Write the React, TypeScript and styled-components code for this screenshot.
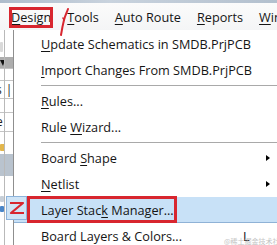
import React from "react";
import styled, { createGlobalStyle } from "styled-components";

const Global = createGlobalStyle`
  html, body { margin: 0; padding: 0; background: #ffffff; }
  body { font-family: "Open Sans", "Noto Sans", "Liberation Sans", sans-serif; overflow: hidden; }
`;

const Screen = styled.div`
  position: relative;
  width: 277px;
  height: 245px;
  overflow: hidden;
  display: flex;
  flex-direction: column;
  background: #ffffff;
`;

const TitleEdge = styled.div`
  height: 3px;
  flex: none;
  background: linear-gradient(90deg, #aebccb 0%, #c9d3de 40%, #b3c0ce 100%);
`;

const MenuBar = styled.div`
  height: 27px;
  flex: none;
  display: flex;
  align-items: stretch;
  padding-left: 3px;
  background: linear-gradient(180deg, #fbfbfb 0%, #f4f5f6 100%);
  font-size: 12.7px;
  color: #151515;
`;

const BarItem = styled.div<{ $marked?: boolean }>`
  position: relative;
  display: flex;
  align-items: center;
  padding: 0 8px;
  white-space: nowrap;
  ${(p) =>
    p.$marked
      ? `&::after {
          content: "";
          position: absolute;
          left: 6px; right: 6px; top: 4px; bottom: 2px;
          border: 3px solid #d8262f;
        }`
      : ""}
`;

const Key = styled.span`
  text-decoration: underline;
  text-decoration-thickness: 1px;
  text-underline-offset: 2px;
`;

const Workspace = styled.div`
  flex: 1;
  display: flex;
  min-height: 0;
`;

const SidePanel = styled.div`
  position: relative;
  width: 13px;
  flex: none;
  display: flex;
  flex-direction: column;
  background: #ffffff;
  overflow: hidden;
  &::before {
    content: "";
    position: absolute;
    left: 4px; top: 0; bottom: 0;
    width: 1px;
    background: #b9b9b9;
  }
`;

const PanelRow = styled.div<{ $h: number; $bg?: string; $line?: boolean }>`
  height: ${(p) => p.$h}px;
  flex: none;
  background: ${(p) => p.$bg ?? "transparent"};
  border-bottom: ${(p) => (p.$line ? "1px solid #c4c4c4" : "none")};
  display: flex;
  align-items: center;
  font-size: 12px;
  color: #222;
  line-height: 1;
`;

const DropTriangle = styled.span`
  width: 0; height: 0;
  border-left: 3px solid transparent;
  border-right: 2px solid transparent;
  border-top: 6px solid #111;
`;

const Frag = styled.span<{ $dx: number }>`
  margin-left: ${(p) => p.$dx}px;
`;

const IconChip = styled.span<{ $c: string; $w?: number; $h?: number }>`
  display: block;
  width: ${(p) => p.$w ?? 4}px;
  height: ${(p) => p.$h ?? 8}px;
  background: ${(p) => p.$c};
  border-radius: 1px;
`;

const Dropdown = styled.div`
  flex: 1;
  display: flex;
  flex-direction: column;
  padding-top: 1px;
  border-left: 1px solid #8f8f8f;
  background: #ffffff;
  font-size: 12.7px;
  color: #151515;
`;

const Item = styled.div<{ $active?: boolean }>`
  position: relative;
  height: 26px;
  flex: none;
  box-sizing: border-box;
  display: grid;
  grid-template-columns: minmax(0, 1fr) 22px 20px;
  align-items: center;
  padding-left: 27px;
  white-space: nowrap;
  background: ${(p) => (p.$active ? "#c8e1f7" : "transparent")};
  border-bottom: 1px solid ${(p) => (p.$active ? "#8fb2d6" : "transparent")};
`;

const Label = styled.span`
  overflow: visible;
`;

const Shortcut = styled.span`
  padding-left: 8px;
`;

const Arrow = styled.span`
  margin-left: 9px;
  width: 0; height: 0;
  border-top: 3.5px solid transparent;
  border-bottom: 3.5px solid transparent;
  border-left: 4px solid #000;
`;

const Separator = styled.div`
  height: 5px;
  flex: none;
  display: flex;
  align-items: center;
  padding-left: 27px;
  &::after {
    content: "";
    flex: 1;
    height: 1px;
    background: #a9a9a9;
  }
`;

const RedFrame = styled.div`
  position: absolute;
  left: 13px;
  top: -1px;
  bottom: -1px;
  width: 150px;
  box-sizing: border-box;
  border: 3px solid #d8262f;
`;

const StepOne = styled.svg`
  position: absolute;
  left: 56px;
  top: 7px;
`;

const StepTwo = styled.div`
  position: absolute;
  left: 6px;
  top: 196px;
  width: 21px;
  height: 24px;
  box-sizing: border-box;
  background: #cfe4f6;
  border: 1px solid #8db4dc;
  display: flex;
  align-items: center;
  justify-content: center;
`;

const Watermark = styled.div`
  position: absolute;
  left: 224px;
  top: 236px;
  font-family: "Noto Sans CJK SC", "Noto Sans", sans-serif;
  font-size: 7px;
  color: #c4c4c4;
  white-space: nowrap;
`;

type Entry =
  | { kind: "item"; pre: string; key: string; post: string; shortcut?: string; sub?: boolean; active?: boolean }
  | { kind: "sep" };

const entries: Entry[] = [
  { kind: "item", pre: "", key: "U", post: "pdate Schematics in SMDB.PrjPCB" },
  { kind: "item", pre: "", key: "I", post: "mport Changes From SMDB.PrjPCB" },
  { kind: "sep" },
  { kind: "item", pre: "", key: "R", post: "ules..." },
  { kind: "item", pre: "Rule ", key: "W", post: "izard..." },
  { kind: "sep" },
  { kind: "item", pre: "Board ", key: "S", post: "hape", sub: true },
  { kind: "item", pre: "", key: "N", post: "etlist", sub: true },
  { kind: "item", pre: "Layer Stac", key: "k", post: " Manager...", active: true },
  { kind: "item", pre: "Board Layers & Colors...", key: "", post: "", shortcut: "L" },
];

const bar = [
  { pre: "", key: "D", post: "esign", marked: true },
  { pre: "", key: "T", post: "ools" },
  { pre: "", key: "A", post: "uto Route" },
  { pre: "", key: "R", post: "eports" },
  { pre: "", key: "W", post: "indow" },
];

export default function App() {
  return (
    <>
      <Global />
      <Screen>
        <TitleEdge />
        <MenuBar>
          {bar.map((b) => (
            <BarItem key={b.post} $marked={b.marked}>
              {b.pre}
              <Key>{b.key}</Key>
              {b.post}
            </BarItem>
          ))}
        </MenuBar>
        <Workspace>
          <SidePanel>
            <PanelRow $h={10} />
            <PanelRow $h={14}>
              <IconChip $c="#d9d9d9" $w={3} $h={10} />
            </PanelRow>
            <PanelRow $h={3} />
            <PanelRow $h={11} $bg="#adadad" $line>
              <DropTriangle />
            </PanelRow>
            <PanelRow $h={11} $line />
            <PanelRow $h={17} $line>
              <Frag $dx={-4}>s</Frag>
              <Frag $dx={4}>|</Frag>
            </PanelRow>
            <PanelRow $h={13} $line />
            <PanelRow $h={18} $line>
              <Frag $dx={-4}>e</Frag>
            </PanelRow>
            <PanelRow $h={8} />
            <PanelRow $h={14}>
              <IconChip $c="#e2b64c" $w={5} $h={7} />
            </PanelRow>
            <PanelRow $h={22} $bg="#b9c3ce" />
            <PanelRow $h={18} />
            <PanelRow $h={10}>
              <IconChip $c="#c7cfd8" $w={4} $h={6} />
            </PanelRow>
            <PanelRow $h={10}>
              <IconChip $c="#4a86c8" $w={4} $h={6} />
            </PanelRow>
          </SidePanel>
          <Dropdown>
            {entries.map((e, i) =>
              e.kind === "sep" ? (
                <Separator key={i} />
              ) : (
                <Item key={i} $active={e.active}>
                  <Label>
                    {e.pre}
                    {e.key && <Key>{e.key}</Key>}
                    {e.post}
                  </Label>
                  <Shortcut>{e.shortcut ?? ""}</Shortcut>
                  {e.sub ? <Arrow /> : <span />}
                  {e.active && <RedFrame />}
                </Item>
              )
            )}
          </Dropdown>
        </Workspace>
        <StepOne width="16" height="32" viewBox="0 0 16 32">
          <path d="M12 2 C11 5 9 9 8 13 C7 17 6 22 5 28" stroke="#d8262f" strokeWidth="2" fill="none" strokeLinecap="round" />
          <path d="M8 13 L7 11" stroke="#d8262f" strokeWidth="1.5" fill="none" strokeLinecap="round" />
        </StepOne>
        <StepTwo>
          <svg width="17" height="14" viewBox="0 0 17 14">
            <path d="M2 2 L15 2 L3 12 L16 12" stroke="#d8262f" strokeWidth="2.2" fill="none" strokeLinejoin="round" />
          </svg>
        </StepTwo>
        <Watermark>@稀土掘金技术社区</Watermark>
      </Screen>
    </>
  );
}
